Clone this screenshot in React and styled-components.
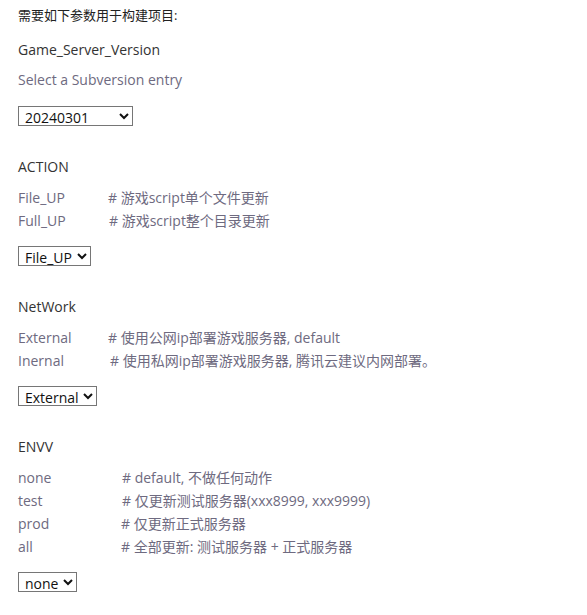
import styled, { createGlobalStyle } from 'styled-components'

const GlobalStyle = createGlobalStyle`
    body {
        margin: 0;
        background: #fff;
        font-family: "Open Sans", "Noto Sans CJK SC", sans-serif;
        color: #333;
    }
`

const params = [
    {
        name: 'ACTION',
        labelWidth: 90,
        options: [
            { value: 'File_UP', desc: '# 游戏script单个文件更新' },
            { value: 'Full_UP', desc: '# 游戏script整个目录更新', shift: 1 },
        ],
    },
    {
        name: 'NetWork',
        labelWidth: 90,
        options: [
            { value: 'External', desc: '# 使用公网ip部署游戏服务器, default' },
            { value: 'Inernal', desc: '# 使用私网ip部署游戏服务器, 腾讯云建议内网部署。', shift: 2 },
        ],
    },
    {
        name: 'ENVV',
        labelWidth: 104,
        options: [
            { value: 'none', desc: '# default, 不做任何动作' },
            { value: 'test', desc: '# 仅更新测试服务器(xxx8999, xxx9999)' },
            { value: 'prod', desc: '# 仅更新正式服务器', shift: -1 },
            { value: 'all', desc: '# 全部更新: 测试服务器 + 正式服务器', shift: -1 },
        ],
    },
]

const App = () => {
    return (
        <Page>
            <GlobalStyle />
            <Intro>需要如下参数用于构建项目:</Intro>

            <Param>
                <Name>Game_Server_Version</Name>
                <Help>Select a Subversion entry</Help>
                <Select $width={115} $gap={16} defaultValue="20240301">
                    <option>20240301</option>
                </Select>
            </Param>

            {params.map(p => (
                <Param key={p.name} $top={31}>
                    <Name>{p.name}</Name>
                    <Choices>
                        {p.options.map(o => (
                            <Choice key={o.value}>
                                <Label $width={p.labelWidth + (o.shift || 0)}>{o.value}</Label>
                                <span>{o.desc}</span>
                            </Choice>
                        ))}
                    </Choices>
                    <Select $gap={15} defaultValue={p.options[0].value}>
                        {p.options.map(o => (
                            <option key={o.value}>{o.value}</option>
                        ))}
                    </Select>
                </Param>
            ))}
        </Page>
    )
}

const Page = styled.div`
    padding: 6px 18px 20px;
`

const Intro = styled.div`
    font-size: 13px;
    line-height: 18px;
    color: #222;
`

const Param = styled.div`
    margin-top: ${props => props.$top || 16}px;
    display: flex;
    flex-direction: column;
    align-items: flex-start;
`

const Name = styled.div`
    font-size: 14px;
    line-height: 20px;
    color: #333;
`

const Help = styled.div`
    margin-top: 10px;
    font-size: 14px;
    line-height: 20px;
    color: #6e6a80;
`

const Choices = styled.div`
    margin-top: 11px;
    display: flex;
    flex-direction: column;
    gap: 3px;
`

const Choice = styled.div`
    display: flex;
    font-size: 14px;
    line-height: 20px;
    color: #6e6a80;
`

const Label = styled.span`
    width: ${props => props.$width}px;
    flex-shrink: 0;
`

const Select = styled.select`
    margin-top: ${props => props.$gap}px;
    height: 20px;
    ${props => props.$width && `width: ${props.$width}px;`}
    padding: 0 1px 0 2px;
    font-family: "Open Sans", sans-serif;
    font-size: 14px;
    color: #111;
    background: #fff;
    border: 1px solid #767676;
    border-radius: 0;
`

export default App
